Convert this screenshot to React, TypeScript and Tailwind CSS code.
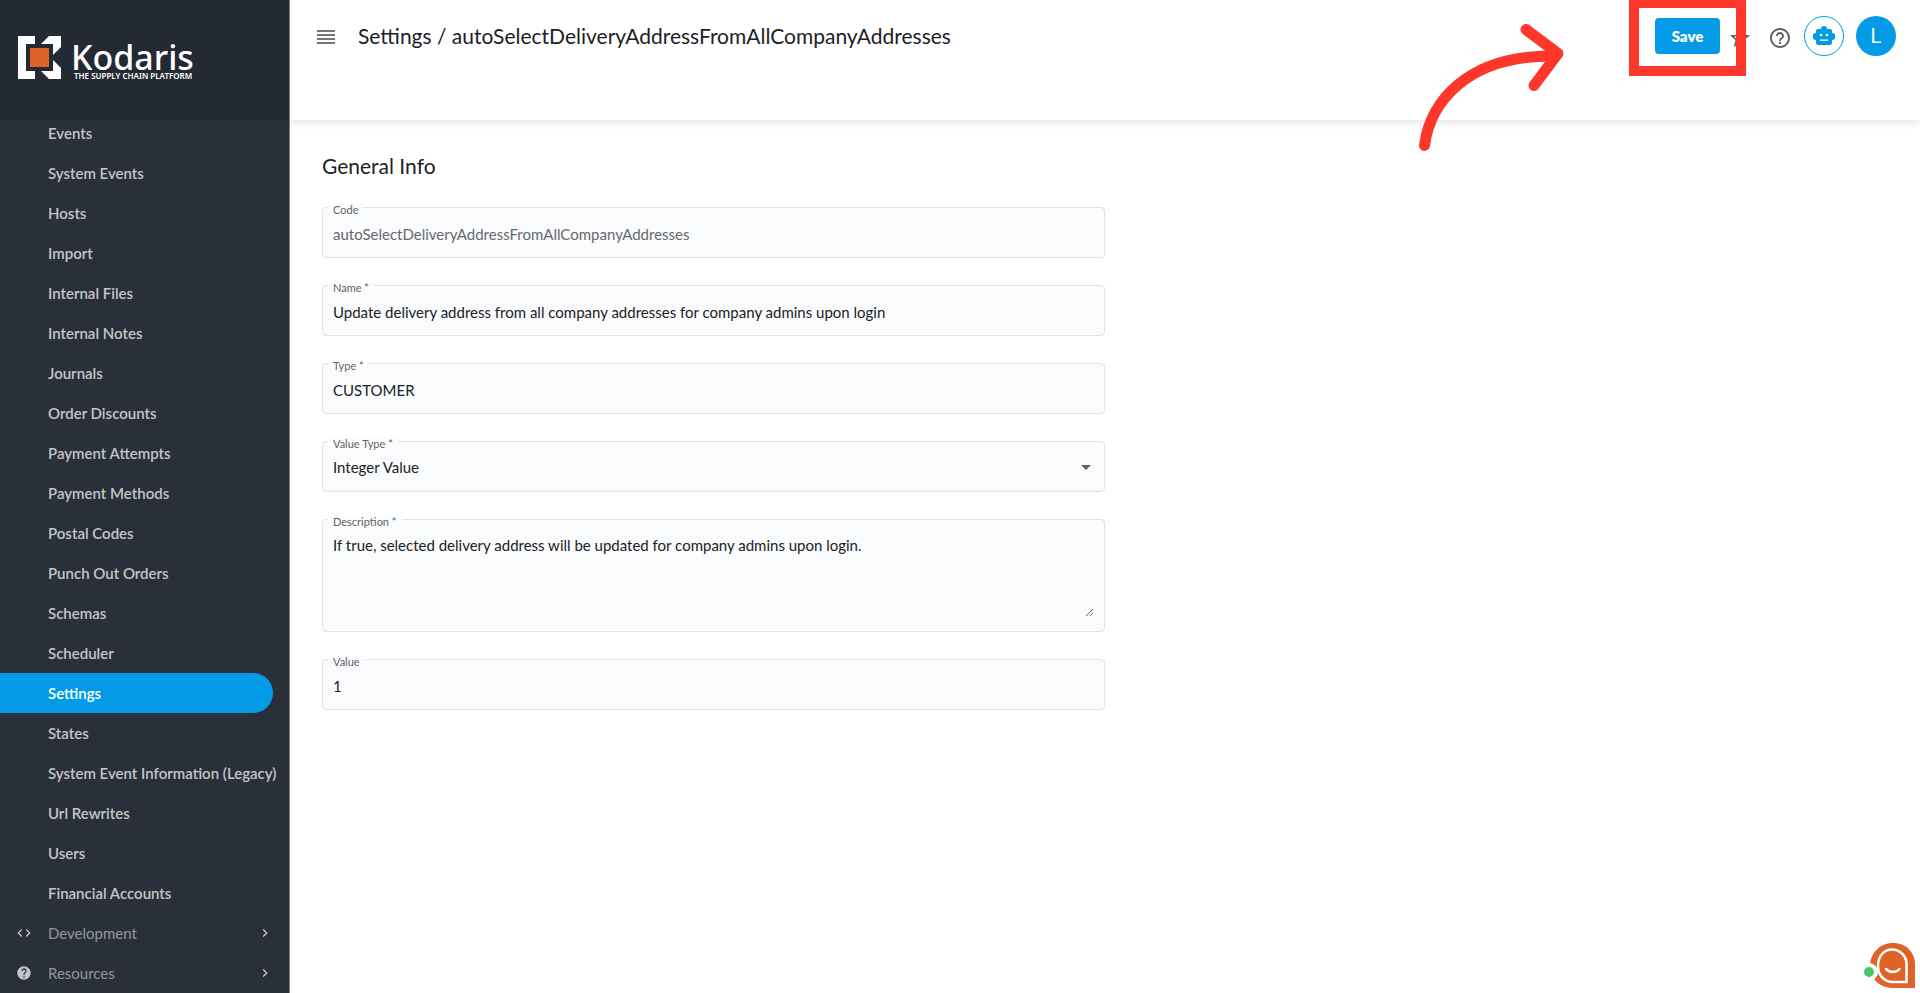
import { ReactNode } from 'react'
import { MdArrowDropDown, MdChevronRight, MdCode, MdHelp, MdHelpOutline, MdReorder, MdStarBorder } from 'react-icons/md'

const navItems = [
  'Events',
  'System Events',
  'Hosts',
  'Import',
  'Internal Files',
  'Internal Notes',
  'Journals',
  'Order Discounts',
  'Payment Attempts',
  'Payment Methods',
  'Postal Codes',
  'Punch Out Orders',
  'Schemas',
  'Scheduler',
  'Settings',
  'States',
  'System Event Information (Legacy)',
  'Url Rewrites',
  'Users',
  'Financial Accounts',
]

const navGroups = [
  { label: 'Development', icon: MdCode },
  { label: 'Resources', icon: MdHelp },
]

function Logo() {
  return (
    <svg width="190" height="66" viewBox="0 -10 190 66" role="img" aria-label="Kodaris">
      <path fill="#fff" d="M0 0H17V8H8V35H17V43H0Z" />
      <path fill="#fff" d="M31 0H43V11L35 19V8H23Z" />
      <path fill="#fff" d="M23 35H35V24L43 32V43H31Z" />
      <rect x="12" y="12" width="19" height="19" fill="#dd6327" />
      <text x="53" y="34" fill="#fff" fontSize="34" fontWeight="500" fontFamily="Noto Sans, sans-serif">
        Kodaris
      </text>
      <text x="56" y="43" fill="#fff" fontSize="8" fontWeight="600" fontFamily="Noto Sans, sans-serif">
        THE SUPPLY CHAIN PLATFORM
      </text>
    </svg>
  )
}

function Sidebar() {
  return (
    <aside className="flex w-[290px] shrink-0 flex-col border-r border-[#7d8087] bg-[#2a303a]">
      <div className="z-10 h-30 shrink-0 bg-[#242a33] pt-[26px] pl-[18px]">
        <Logo />
      </div>
      <nav className="-mt-[7px] min-h-0 flex-1 overflow-hidden text-[15px] text-[#c4c6c9]">
        {navItems.map((item) => (
          <a
            key={item}
            href="#"
            className={
              item === 'Settings'
                ? 'mr-4 flex h-10 items-center rounded-r-full bg-[#039be5] pl-12 font-semibold whitespace-nowrap text-white'
                : 'flex h-10 items-center pl-12 font-semibold whitespace-nowrap'
            }
          >
            {item}
          </a>
        ))}
        {navGroups.map(({ label, icon: Icon }) => (
          <a key={label} href="#" className="flex h-10 items-center pr-4 pl-4">
            <Icon className="size-4" />
            <span className="ml-4 flex-1 text-[#94979d]">{label}</span>
            <MdChevronRight className="size-4" />
          </a>
        ))}
      </nav>
    </aside>
  )
}

function RobotIcon() {
  return (
    <svg width="22" height="20" viewBox="0 0 22 20" fill="#039be5">
      <path d="M11 0a3 3 0 0 1 3 3h3a2 2 0 0 1 2 2v2a3 3 0 0 1 0 7v3a2 2 0 0 1-2 2H5a2 2 0 0 1-2-2v-3a3 3 0 0 1 0-7V5a2 2 0 0 1 2-2h3a3 3 0 0 1 3-3Z" />
      <circle cx="8" cy="9" r="1.300" fill="#fff" />
      <circle cx="14" cy="9" r="1.300" fill="#fff" />
      <path fill="#fff" d="M7 13.500h8v1.500H7z" />
    </svg>
  )
}

function Header() {
  return (
    <header className="flex h-30 shrink-0 items-start bg-white pr-6 pl-6 shadow-[0_2px_8px_rgba(0,0,0,0.12)]">
      <button type="button" aria-label="Toggle menu" className="mt-[25px] text-[#77777b]">
        <MdReorder className="size-6" />
      </button>
      <h1 className="mt-[22px] ml-5 flex-1 text-[21px] leading-7">
        Settings / autoSelectDeliveryAddressFromAllCompanyAddresses
      </h1>
      <div className="mt-4 flex h-10 items-center">
        <button type="button" className="h-9 w-[65px] rounded bg-[#039be5] text-[15px] font-extrabold text-white">
          Save
        </button>
        <button type="button" aria-label="Add to favorites" className="mt-[3px] ml-2 text-[#5f6368]">
          <MdStarBorder className="size-6" />
        </button>
        <button type="button" aria-label="Help" className="mt-[3px] ml-4 text-[#5f6368]">
          <MdHelpOutline className="size-6" />
        </button>
        <button
          type="button"
          aria-label="Assistant"
          className="ml-3 flex size-10 items-center justify-center rounded-full border border-[#039be5]"
        >
          <RobotIcon />
        </button>
        <button type="button" className="ml-3 size-10 rounded-full bg-[#039be5] font-['Roboto',sans-serif] text-xl text-white">
          L
        </button>
      </div>
    </header>
  )
}

interface FieldProps {
  id: string
  label: string
  children: ReactNode
}

function Field({ id, label, children }: FieldProps) {
  return (
    <div className="relative rounded border border-[#dfe1e2] bg-[#fafbfd]">
      <label
        htmlFor={id}
        className="absolute -top-1 left-[5px] bg-[#fafbfd] px-[5px] text-[11px] leading-3 text-[#5f6368]"
      >
        {label}
      </label>
      {children}
    </div>
  )
}

function SettingsForm() {
  return (
    <form className="flex w-1/2 flex-col gap-[27px] text-[15px]">
      <Field id="code" label="Code">
        <input
          id="code"
          defaultValue="autoSelectDeliveryAddressFromAllCompanyAddresses"
          disabled
          className="block h-[49px] w-full bg-transparent px-[10px] pt-[2px] text-[#66696d]"
        />
      </Field>
      <Field id="name" label="Name *">
        <input
          id="name"
          defaultValue="Update delivery address from all company addresses for company admins upon login"
          className="block h-[49px] w-full bg-transparent px-[10px] pt-[2px] outline-none"
        />
      </Field>
      <Field id="type" label="Type *">
        <input
          id="type"
          defaultValue="CUSTOMER"
          className="block h-[49px] w-full bg-transparent px-[10px] pt-[2px] outline-none"
        />
      </Field>
      <Field id="valueType" label="Value Type *">
        <select
          id="valueType"
          className="block h-[49px] w-full appearance-none bg-transparent px-[10px] pt-[2px] outline-none"
        >
          <option>Integer Value</option>
        </select>
        <MdArrowDropDown className="pointer-events-none absolute top-[13px] right-[6px] size-6 text-[#5f6368]" />
      </Field>
      <Field id="description" label="Description *">
        <textarea
          id="description"
          defaultValue="If true, selected delivery address will be updated for company admins upon login."
          className="mx-[10px] mt-[13px] mb-[14px] block h-[84px] w-[calc(100%-20px)] resize-y bg-transparent leading-6 outline-none"
        />
      </Field>
      <Field id="value" label="Value">
        <input
          id="value"
          defaultValue="1"
          className="block h-[49px] w-full bg-transparent px-[10px] pt-[2px] outline-none"
        />
      </Field>
    </form>
  )
}

function SaveHighlight() {
  return (
    <div className="pointer-events-none absolute top-0 right-[174px]">
      <svg width="330" height="160" viewBox="0 0 330 160" fill="none" stroke="#ff372b">
        <path strokeWidth="10" d="M218 3H325V71H218Z" />
        <path strokeWidth="11" strokeLinecap="round" d="M8.500 145.500C14 103 50 55 138 56" />
        <path strokeWidth="11" strokeLinecap="round" strokeLinejoin="round" d="M110 29.500L142 53.500L118 85.500" />
      </svg>
    </div>
  )
}

function ChatWidget() {
  return (
    <button type="button" aria-label="Open chat" className="absolute right-0 bottom-0">
      <svg width="60" height="56" viewBox="0 0 60 56">
        <path fill="#dd6327" d="M33 6C46 6 55 15 55 28V51H33C20 51 10 42 10 29C10 16 20 6 33 6Z" />
        <path
          fill="none"
          stroke="#fff"
          strokeWidth="2.500"
          d="M32 12.500C40 12.500 46.500 19 46.500 27V45H33C24 45 18 38 18 29C18 19 24 12.500 32 12.500Z"
        />
        <path fill="none" stroke="#fff" strokeWidth="2.500" strokeLinecap="round" d="M26 32C30 36 36 36 39.500 32" />
        <circle cx="9" cy="35" r="9" fill="#fff" />
        <circle cx="9" cy="35" r="5" fill="#45c96b" />
      </svg>
    </button>
  )
}

export default function App() {
  return (
    <div className="relative flex h-screen overflow-hidden bg-white font-['Lato',sans-serif] text-[#202124]">
      <Sidebar />
      <div className="flex min-w-0 flex-1 flex-col">
        <Header />
        <main className="flex-1 px-8 pt-8">
          <h2 className="mb-[27px] text-[21px] leading-7">General Info</h2>
          <SettingsForm />
        </main>
      </div>
      <SaveHighlight />
      <ChatWidget />
    </div>
  )
}
